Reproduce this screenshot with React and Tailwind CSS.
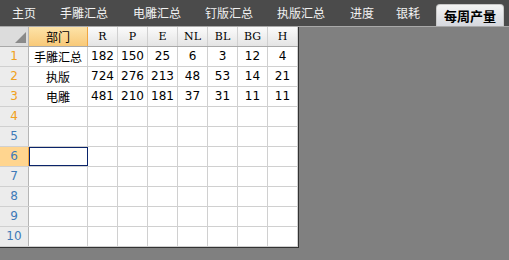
const tabs = ['主页', '手雕汇总', '电雕汇总', '钉版汇总', '执版汇总', '进度', '银耗']
const tabX = ['ml-[12px]', 'ml-[24px]', 'ml-[25px]', 'ml-[24px]', 'ml-[24px]', 'ml-[25px]', 'ml-[22px]']
const cols = ['R', 'P', 'E', 'NL', 'BL', 'BG', 'H']
const rows = [
  ['手雕汇总', 182, 150, 25, 6, 3, 12, 4],
  ['执版', 724, 276, 213, 48, 53, 14, 21],
  ['电雕', 481, 210, 181, 37, 31, 11, 11],
]

const cjk = "font-['Noto_Sans_CJK_SC',sans-serif]"
const num = "font-['DejaVu_Sans','Noto_Sans_CJK_SC',sans-serif]"

const App = () => {
  const allRows = Array.from({ length: 10 }, (_, i) => rows[i] || null)

  return (
    <div className="w-[509px] h-[260px] bg-[#808080] overflow-hidden">
      <div className={`h-[27px] bg-[#4b4b4b] border-b border-[#a9a9a9] flex items-end whitespace-nowrap ${cjk}`}>
        {tabs.map((t, i) => (
          <div key={t} className={`${tabX[i]} shrink-0 h-[26px] leading-[26px] text-[12px] text-[#f2f2f2]`}>
            {t}
          </div>
        ))}
        <div className="ml-[16px] shrink-0 w-[68px] h-[22px] rounded-t-[4px] bg-gradient-to-b from-[#f4f4f4] to-[#d6d8de] border border-b-0 border-[#c8c8c8] text-center leading-[22px] text-[13px] font-bold text-black">
          每周产量
        </div>
      </div>

      <div className="w-[299px] border-r border-b border-[#333]">
        <div className="flex h-[20px] bg-gradient-to-b from-[#fbfbfb] to-[#e4e4e4] border-b border-[#a9a9a9]">
          <div className="w-[29px] shrink-0 bg-[#dcdcdc] border-r border-[#b5b5b5] relative">
            <div className="absolute right-[2px] bottom-[3px] w-0 h-0 border-l-[11px] border-l-transparent border-b-[11px] border-b-[#8a8a8a]" />
          </div>
          <div className={`w-[59px] shrink-0 bg-gradient-to-b from-[#fde3a8] to-[#f8c978] border-r border-[#f0a640] text-center text-[12px] leading-[19px] text-black ${cjk}`}>
            部门
          </div>
          {cols.map((c) => (
            <div
              key={c}
              className="w-[30px] shrink-0 border-r border-[#d0d0d0] text-center text-[11px] leading-[20px] text-black font-['DejaVu_Serif',serif]"
            >
              {c}
            </div>
          ))}
        </div>

        {allRows.map((r, i) => {
          const selected = i === 5
          return (
            <div key={i} className="flex h-[20px] bg-white border-b border-[#d0d0d0]">
              <div
                className={`w-[29px] shrink-0 border-r text-center text-[12px] leading-[19px] ${num} ${
                  selected
                    ? 'bg-[#ffd58f] border-[#f0a640] text-[#3e7ab8]'
                    : i < 4
                    ? 'bg-[#ececec] border-[#b5b5b5] text-[#f0a020]'
                    : 'bg-[#ececec] border-[#b5b5b5] text-[#3e7ab8]'
                }`}
              >
                {i + 1}
              </div>
              <div
                className={`w-[59px] shrink-0 border-r border-[#d0d0d0] text-center text-[12px] leading-[19px] text-black ${cjk} ${
                  selected ? 'outline-[1.5px] outline-solid -outline-offset-1 outline-[#0a246a]' : ''
                }`}
              >
                {r ? r[0] : ''}
              </div>
              {cols.map((c, j) => (
                <div
                  key={c}
                  className={`w-[30px] shrink-0 border-r border-[#d0d0d0] text-center text-[12px] leading-[19px] text-black ${num}`}
                >
                  {r ? r[j + 1] : ''}
                </div>
              ))}
            </div>
          )
        })}
      </div>
    </div>
  )
}

export default App
